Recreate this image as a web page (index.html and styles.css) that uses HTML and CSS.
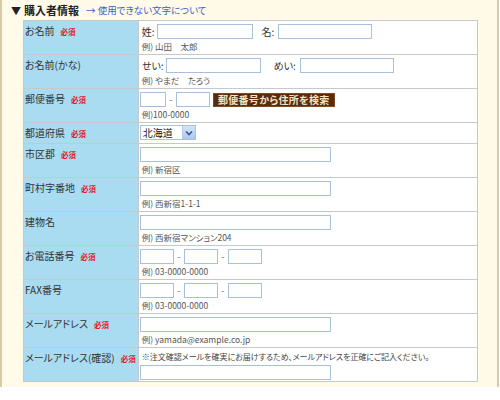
FILE: index.html
```html
<!DOCTYPE html>
<html lang="ja">
<head>
<meta charset="utf-8">
<title>購入者情報</title>
<link rel="stylesheet" href="styles.css">
</head>
<body>
<div class="panel">
  <div class="head">
    <span class="tri">▼</span><span class="title">購入者情報</span>
    <a class="link" href="#">→ 使用できない文字について</a>
  </div>
  <table class="form">
    <tr>
      <th>お名前<span class="req">必須</span></th>
      <td>
        <div class="line"><span class="lbl">姓:</span><input class="in w96"><span class="lbl l2">名:</span><input class="in w94"></div>
        <div class="ex">例) 山田　太郎</div>
      </td>
    </tr>
    <tr>
      <th>お名前(かな)</th>
      <td>
        <div class="line"><span class="lbl">せい:</span><input class="in w95"><span class="lbl l3">めい:</span><input class="in w94"></div>
        <div class="ex">例) やまだ　たろう</div>
      </td>
    </tr>
    <tr>
      <th>郵便番号<span class="req">必須</span></th>
      <td>
        <div class="line"><input class="in w26"><span class="dash">-</span><input class="in w34"><span class="btn">郵便番号から住所を検索</span></div>
        <div class="ex">例)100-0000</div>
      </td>
    </tr>
    <tr>
      <th>都道府県<span class="req">必須</span></th>
      <td class="tight">
        <div class="select"><span class="sel-text">北海道</span><span class="sel-btn"><svg width="8" height="6" viewBox="0 0 8 6"><path d="M1 1.5 L4 4.5 L7 1.5" fill="none" stroke="#36589e" stroke-width="1.6"/></svg></span></div>
      </td>
    </tr>
    <tr>
      <th>市区郡<span class="req">必須</span></th>
      <td>
        <div class="line"><input class="in w191"></div>
        <div class="ex">例) 新宿区</div>
      </td>
    </tr>
    <tr>
      <th>町村字番地<span class="req">必須</span></th>
      <td>
        <div class="line"><input class="in w191"></div>
        <div class="ex">例) 西新宿1-1-1</div>
      </td>
    </tr>
    <tr>
      <th>建物名</th>
      <td>
        <div class="line"><input class="in w191"></div>
        <div class="ex">例) 西新宿マンション204</div>
      </td>
    </tr>
    <tr>
      <th>お電話番号<span class="req">必須</span></th>
      <td>
        <div class="line"><input class="in w34"><span class="dash">-</span><input class="in w34"><span class="dash">-</span><input class="in w34"></div>
        <div class="ex">例) 03-0000-0000</div>
      </td>
    </tr>
    <tr>
      <th>FAX番号</th>
      <td>
        <div class="line"><input class="in w34"><span class="dash">-</span><input class="in w34"><span class="dash">-</span><input class="in w34"></div>
        <div class="ex">例) 03-0000-0000</div>
      </td>
    </tr>
    <tr>
      <th>メールアドレス<span class="req">必須</span></th>
      <td>
        <div class="line"><input class="in w191"></div>
        <div class="ex">例) yamada@example.co.jp</div>
      </td>
    </tr>
    <tr>
      <th>メールアドレス(確認)<span class="req">必須</span></th>
      <td class="last">
        <div class="note">※注文確認メールを確実にお届けするため、メールアドレスを正確にご記入ください。</div>
        <div class="line"><input class="in w191"></div>
      </td>
    </tr>
  </table>
</div>
</body>
</html>
```

FILE: styles.css
```css
* { box-sizing: border-box; }
body {
  margin: 0;
  background: #ffffff;
  font-family: "Noto Sans CJK JP", "Noto Sans", sans-serif;
  font-feature-settings: "palt";
  color: #333;
}
.panel {
  width: 499px;
  background: #fffbe8;
  border-left: 2px solid #dcc9a6;
  border-right: 2px solid #dcc9a6;
  padding: 2px 0 5px 21px;
}
.head {
  height: 17px;
  line-height: 17px;
  margin: 0 0 1px -12px;
  display: flex;
  align-items: center;
  white-space: nowrap;
}
.tri { font-size: 10px; color: #222; margin-right: 3px; }
.title { font-size: 11px; font-weight: bold; color: #222; }
.link {
  font-size: 9.5px;
  color: #3a5fbf;
  text-decoration: none;
  margin-left: 7px;
}
.form {
  width: 455px;
  border-collapse: collapse;
  border: 1px solid #c4c4c4;
}
.form th, .form td {
  border: 1px solid #c8c8c8;
  vertical-align: top;
}
.form th {
  width: 113px;
  background: #a9dbf1;
  text-align: left;
  font-weight: normal;
  font-size: 10px;
  line-height: 14px;
  padding: 3px 2px 2px 1px;
  color: #333;
  white-space: nowrap;
}
.req {
  color: #e8141a;
  font-size: 7.5px;
  font-weight: bold;
  margin-left: 6px;
}
.form td {
  background: #fff;
  padding: 3px 2px 2px 1px;
  font-size: 10px;
}
.form td.tight { padding-top: 2px; padding-bottom: 3px; }
.form td.last { padding-bottom: 1px; }
.line {
  display: flex;
  align-items: center;
  height: 15px;
}
.lbl { font-size: 10px; color: #333; margin: 0 2px 0 2px; }
.l2 { margin-left: 9px; margin-right: 4px; }
.l3 { margin-left: 13px; margin-right: 4px; }
.in {
  height: 15px;
  border: 1px solid #a8c0dc;
  background: #fff;
  padding: 0;
  margin: 0;
  font-size: 10px;
}
.w26 { width: 26px; }
.w34 { width: 34px; }
.w94 { width: 94px; }
.w95 { width: 95px; }
.w96 { width: 96px; }
.w191 { width: 191px; }
.dash { width: 10px; text-align: center; font-size: 9px; color: #666; }
.btn {
  margin-left: 3px;
  width: 122px;
  height: 14px;
  background: #5a2a0c;
  border: 1px solid #7b4b24;
  color: #f2e2c0;
  font-size: 10px;
  font-weight: bold;
  line-height: 12px;
  text-align: center;
  letter-spacing: 0.3px;
}
.ex {
  font-size: 8.5px;
  line-height: 12px;
  margin-top: 1px;
  color: #555;
  padding-left: 2px;
}
.note {
  font-size: 8px;
  line-height: 12px;
  color: #444;
  padding-left: 2px;
  margin-bottom: 2px;
  white-space: nowrap;
}
.select {
  width: 56px;
  height: 15px;
  border: 1px solid #a8c0dc;
  display: flex;
  align-items: stretch;
  background: #fff;
}
.sel-text {
  flex: 1;
  font-size: 10px;
  line-height: 13px;
  padding-left: 2px;
  color: #222;
}
.sel-btn {
  width: 13px;
  background: linear-gradient(#d6e4f8, #aec8ee);
  border-left: 1px solid #b8cbe6;
  display: flex;
  align-items: center;
  justify-content: center;
}
```
